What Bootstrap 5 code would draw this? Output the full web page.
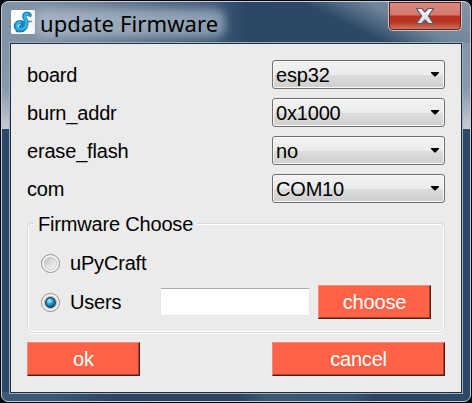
<!DOCTYPE html>
<html lang="en">
<head>
<meta charset="utf-8">
<meta name="viewport" content="width=device-width, initial-scale=1">
<title>update Firmware</title>
<link href="https://cdn.jsdelivr.net/npm/bootstrap@5.3.0/dist/css/bootstrap.min.css" rel="stylesheet">
<style>
body{background:#05060d;font:20px/24px "Liberation Sans",Arial,sans-serif;letter-spacing:-.18px;color:#000;width:472px;height:403px;overflow:hidden;padding:1px}
.win{width:470px;height:401px;border:1px solid #c3ced9;border-radius:7px;overflow:hidden;padding:0 7px 7px;
background:
linear-gradient(#8093a8 0,#8798aa 45px,#c5ccd5 86px) 0 41px/8px 86px no-repeat,
linear-gradient(#8396a9 0,#8798aa 45px,#c5ccd5 86px) 100% 41px/8px 86px no-repeat,
linear-gradient(90deg,#3d5874 0,#3d5874 12%,#2d4764 22%,#2b4561 50%,#3e5a73 57%,#3a5570 74%,#2b4561 80%,#2d4967) 0 100%/100% 9px no-repeat,
linear-gradient(90deg,#8093a7 0,#8192a5 30px,#65788d 110px,#415b78 205px,#2c4766 245px,#2c4866 300px,transparent 300px) 0 0/100% 41px no-repeat,
linear-gradient(26deg,#2c4866 0,#2c4866 33%,#71859a 60%,#8395a8 100%) 100% 0/170px 41px no-repeat,
#2d4866}
.titlebar{height:40px;flex:none}
.app-icon{width:24px;height:24px;margin:8px 0 0 2px}
.caption-text{font:22px/30px "Noto Sans",sans-serif;margin:6px 0 0 5px;position:relative;z-index:0;white-space:nowrap;letter-spacing:.12px}
.caption-text::before{content:"";position:absolute;z-index:-1;inset:1px -7px 1px -5px;background:rgba(190,203,217,.6);filter:blur(5px);border-radius:9px}
.x-btn{width:74px;height:29px;padding:0;margin-right:1px;border:1px solid #c9c3c8;border-top:0;border-radius:0 0 5px 5px;
background:linear-gradient(#d98a80 0,#d4786d 13px,#bd2f1b 14px,#b93520 20px,#cf7460 27px);box-shadow:inset 0 0 0 1px #5e2420}
.client{background:#ebebeb;border:1px solid #1e2c3b;outline:1px solid #9fb0bf;margin:1px 1px;padding:16px 16px 15px}
.rows{gap:9px}
.rows>div{height:29px}
.combo{width:173px;height:29px;border:1px solid #707070;border-radius:3px;background:linear-gradient(#f3f3f3,#ebebeb 50%,#dddddd 51%,#cecece);box-shadow:inset 0 0 0 1px #f8f8f8;padding:0 5px 0 3px}
.group{height:110px;margin:20px 0 9px;border:1px solid #d3dce5;border-radius:4px;box-shadow:inset 0 0 0 1px #fff,0 1px 0 #fff;padding:0 13px}
.group-title{background:#ebebeb;padding:0 4px;margin:-12px 0 0 -7px;height:24px;width:max-content}
.dial{width:19px;height:19px;flex:none;margin-right:10px}
.path-box{width:150px;height:28px;padding:0;border:1px solid #e0e5ee;border-top-color:#abadb3;border-radius:2px;background:#fff}
.act{height:34px;padding:0;line-height:30px;font-size:20px;letter-spacing:-.18px;color:#fff;background:#ff6347;border-radius:0;border:1px solid #ff8670;border-right-color:#4c1d15;border-bottom-color:#4c1d15;box-shadow:inset -1px -1px 0 #aa412f}
.act:hover{background:#ff6347;color:#fff}
.w-a{width:113px}.w-b{width:173px}
.choose-row{margin-top:10px;height:34px}
.radio-one{margin-top:15px;height:24px}
.x-mark{margin-top:5px}
</style>
<script src="https://cdn.jsdelivr.net/npm/bootstrap@5.3.0/dist/js/bootstrap.bundle.min.js"></script>
</head>
<body>
<div class="win d-flex flex-column">
  <header class="titlebar d-flex align-items-start">
    <svg class="app-icon" viewBox="0 0 24 24"><rect width="24" height="24" rx="1.5" fill="#fff"/>
      <g fill="none" stroke-linecap="round" stroke-linejoin="round">
        <path d="M14 3.500C18 1.500 21.500 4 19.500 6.500M17 11.500h3.500" stroke="#777" stroke-width="1.600"/>
        <path d="M18 4.500C15 2.500 12.500 4.500 13.500 7.500C16 11 17 19.500 9.500 19.800C3 20 3.500 12.300 9 12C13 12 12.500 16 10 16.500" stroke="#1786c0" stroke-width="4.200"/>
        <path d="M17 4.300C15 3.500 13 5 13.800 7.500C16 12 16.500 19 9.500 19.200C4.500 19 4.800 13 9 12.300" stroke="#35b5e8" stroke-width="2.300"/>
        <path d="M5 21.500C8 22.500 12 22 14 20.500" stroke="#31627d" stroke-width="1"/>
      </g></svg>
    <div class="caption-text">update Firmware</div>
    <button class="btn x-btn ms-auto d-flex justify-content-center" type="button" aria-label="Close">
      <svg class="x-mark" width="20" height="18" viewBox="0 0 20 18"><defs><linearGradient id="xg" x2="0" y2="1"><stop stop-color="#fff"/><stop offset="1" stop-color="#d5d5d5"/></linearGradient></defs><path d="M1.500 1.500H6.800L10 5L13.200 1.500H18.500L13.300 9L18.500 16.500H13.200L10 13L6.800 16.500H1.500L6.700 9Z" fill="url(#xg)" stroke="#555a6d" stroke-width="1.200" stroke-linejoin="round"/></svg>
    </button>
  </header>
  <main class="client flex-grow-1">
    <div class="rows d-flex flex-column">
      <div class="d-flex justify-content-between align-items-center"><span>board</span><div class="combo d-flex justify-content-between align-items-center"><span>esp32</span><svg width="8" height="5" viewBox="0 0 8 5"><path d="M0 0h8v1L4.500 4.500h-1L0 1z"/></svg></div></div>
      <div class="d-flex justify-content-between align-items-center"><span>burn_addr</span><div class="combo d-flex justify-content-between align-items-center"><span>0x1000</span><svg width="8" height="5" viewBox="0 0 8 5"><path d="M0 0h8v1L4.500 4.500h-1L0 1z"/></svg></div></div>
      <div class="d-flex justify-content-between align-items-center"><span>erase_flash</span><div class="combo d-flex justify-content-between align-items-center"><span>no</span><svg width="8" height="5" viewBox="0 0 8 5"><path d="M0 0h8v1L4.500 4.500h-1L0 1z"/></svg></div></div>
      <div class="d-flex justify-content-between align-items-center"><span>com</span><div class="combo d-flex justify-content-between align-items-center"><span>COM10</span><svg width="8" height="5" viewBox="0 0 8 5"><path d="M0 0h8v1L4.500 4.500h-1L0 1z"/></svg></div></div>
    </div>
    <section class="group">
      <div class="group-title">Firmware Choose</div>
      <div class="radio-one d-flex align-items-center">
        <svg class="dial" viewBox="0 0 19 19"><defs><linearGradient id="rg" x2="1" y2="1"><stop stop-color="#b9bcbf"/><stop offset=".5" stop-color="#dedfe0"/><stop offset="1" stop-color="#f6f6f6"/></linearGradient></defs><circle cx="9.500" cy="9.500" r="9" fill="#f6f6f6" stroke="#8e8f8f"/><circle cx="9.500" cy="9.500" r="6.300" fill="url(#rg)" stroke="#c3c6c9" stroke-width=".8"/></svg>
        <span>uPyCraft</span>
      </div>
      <div class="choose-row d-flex align-items-center">
        <svg class="dial" viewBox="0 0 19 19"><defs><radialGradient id="bg" cx=".38" cy=".32" r=".7"><stop stop-color="#c9f3fd"/><stop offset=".4" stop-color="#34b4e0"/><stop offset="1" stop-color="#0d547f"/></radialGradient></defs><circle cx="9.500" cy="9.500" r="9" fill="#f6f6f6" stroke="#8e8f8f"/><circle cx="9.500" cy="9.500" r="6.300" fill="#c4ccd3" stroke="#b0b8bf" stroke-width=".8"/><circle cx="9.500" cy="9.500" r="4.800" fill="url(#bg)" stroke="#123a58" stroke-width="1.200"/></svg>
        <span>Users</span>
        <input class="path-box ms-auto me-2" type="text" aria-label="Firmware path">
        <button class="btn act w-a" type="button">choose</button>
      </div>
    </section>
    <div class="d-flex justify-content-between"><button class="btn act w-a" type="button">ok</button><button class="btn act w-b" type="button">cancel</button></div>
  </main>
</div>
</body>
</html>
